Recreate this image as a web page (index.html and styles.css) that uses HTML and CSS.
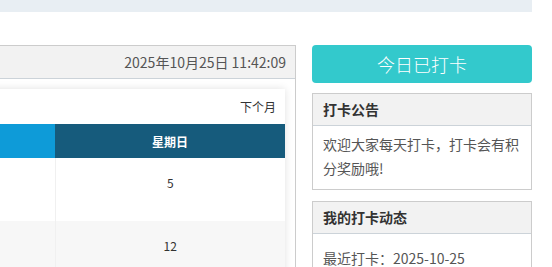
FILE: index.html
```html
<!DOCTYPE html>
<html lang="zh-CN">
<head>
    <meta charset="UTF-8">
    <meta name="viewport" content="width=device-width, initial-scale=1.0">
    <title>每日打卡</title>
    <link rel="stylesheet" href="styles.css">
</head>
<body>

<div class="top-band"></div>

<div class="layout">
    <div class="main-panel">
        <div class="panel-head">
            <span id="clock">2025年10月25日 11:42:09</span>
        </div>
        <div class="panel-body">
            <div class="calendar">
                <div class="cal-nav">下个月</div>
                <table class="cal-table">
                    <thead>
                        <tr>
                            <th class="sat"></th>
                            <th class="sun">星期日</th>
                        </tr>
                    </thead>
                    <tbody>
                        <tr>
                            <td></td>
                            <td>5</td>
                        </tr>
                        <tr class="alt">
                            <td></td>
                            <td>12</td>
                        </tr>
                    </tbody>
                </table>
            </div>
        </div>
    </div>

    <div class="side">
        <button class="sign-btn">今日已打卡</button>

        <div class="box">
            <div class="box-head">打卡公告</div>
            <div class="box-body">欢迎大家每天打卡，打卡会有积分奖励哦!</div>
        </div>

        <div class="box">
            <div class="box-head">我的打卡动态</div>
            <div class="box-body recent">最近打卡：2025-10-25</div>
        </div>
    </div>
</div>

</body>
</html>
```

FILE: styles.css
```css
body {
    font-family: "Noto Sans CJK SC", "Noto Sans", sans-serif;
    background-color: #fff;
    margin: 0;
    color: #333;
    overflow: hidden;
}
.top-band {
    width: 532px;
    height: 12px;
    background: #e8eef3;
}
.layout {
    display: flex;
    gap: 16px;
    width: 532px;
    padding-top: 33px;
}
.main-panel {
    flex: 1;
    margin-left: -300px;
    border: 1px solid #ccc;
    height: 400px;
}
.panel-head {
    height: 32px;
    line-height: 32px;
    background: #f2f2f2;
    border-bottom: 1px solid #ccd3d9;
    text-align: right;
    padding-right: 9px;
    font-size: 14px;
    color: #555;
}
.panel-body {
    padding: 10px;
}
.calendar {
    background: #fff;
    box-shadow: 0 0 8px rgba(0, 0, 0, 0.12);
}
.cal-nav {
    height: 35px;
    line-height: 35px;
    text-align: right;
    padding-right: 9px;
    font-size: 12px;
}
.cal-table {
    width: 100%;
    border-collapse: collapse;
    font-size: 12px;
}
.cal-table th {
    height: 34px;
    color: #fff;
    font-weight: bold;
    padding: 0;
}
.cal-table th.sat {
    background: #0e9bd8;
}
.cal-table th.sun {
    background: #165b7c;
    width: 230px;
}
.cal-table td {
    height: 63px;
    text-align: center;
    vertical-align: top;
    padding: 16px 0 0;
    box-sizing: border-box;
    border-left: 1px solid #f0f0f0;
}
.cal-table td:first-child {
    border-left: none;
}
.cal-table tr.alt td {
    background: #f7f7f7;
}
.side {
    width: 220px;
    flex: none;
}
.sign-btn {
    display: block;
    width: 100%;
    height: 38px;
    border: none;
    border-radius: 4px;
    background: #33c9cc;
    color: #fff;
    font-family: inherit;
    font-size: 18px;
    font-weight: 300;
    margin-bottom: 10px;
    padding: 0;
}
.box {
    border: 1px solid #ccc;
    margin-bottom: 11px;
}
.box-head {
    height: 31px;
    line-height: 31px;
    background: #f2f2f2;
    border-bottom: 1px solid #ccd3d9;
    padding-left: 10px;
    font-size: 14px;
    font-weight: bold;
}
.box-body {
    padding: 6px 10px 9px;
    font-size: 14px;
    line-height: 24px;
    color: #555;
}
.box-body.recent {
    padding-top: 12px;
}
```
